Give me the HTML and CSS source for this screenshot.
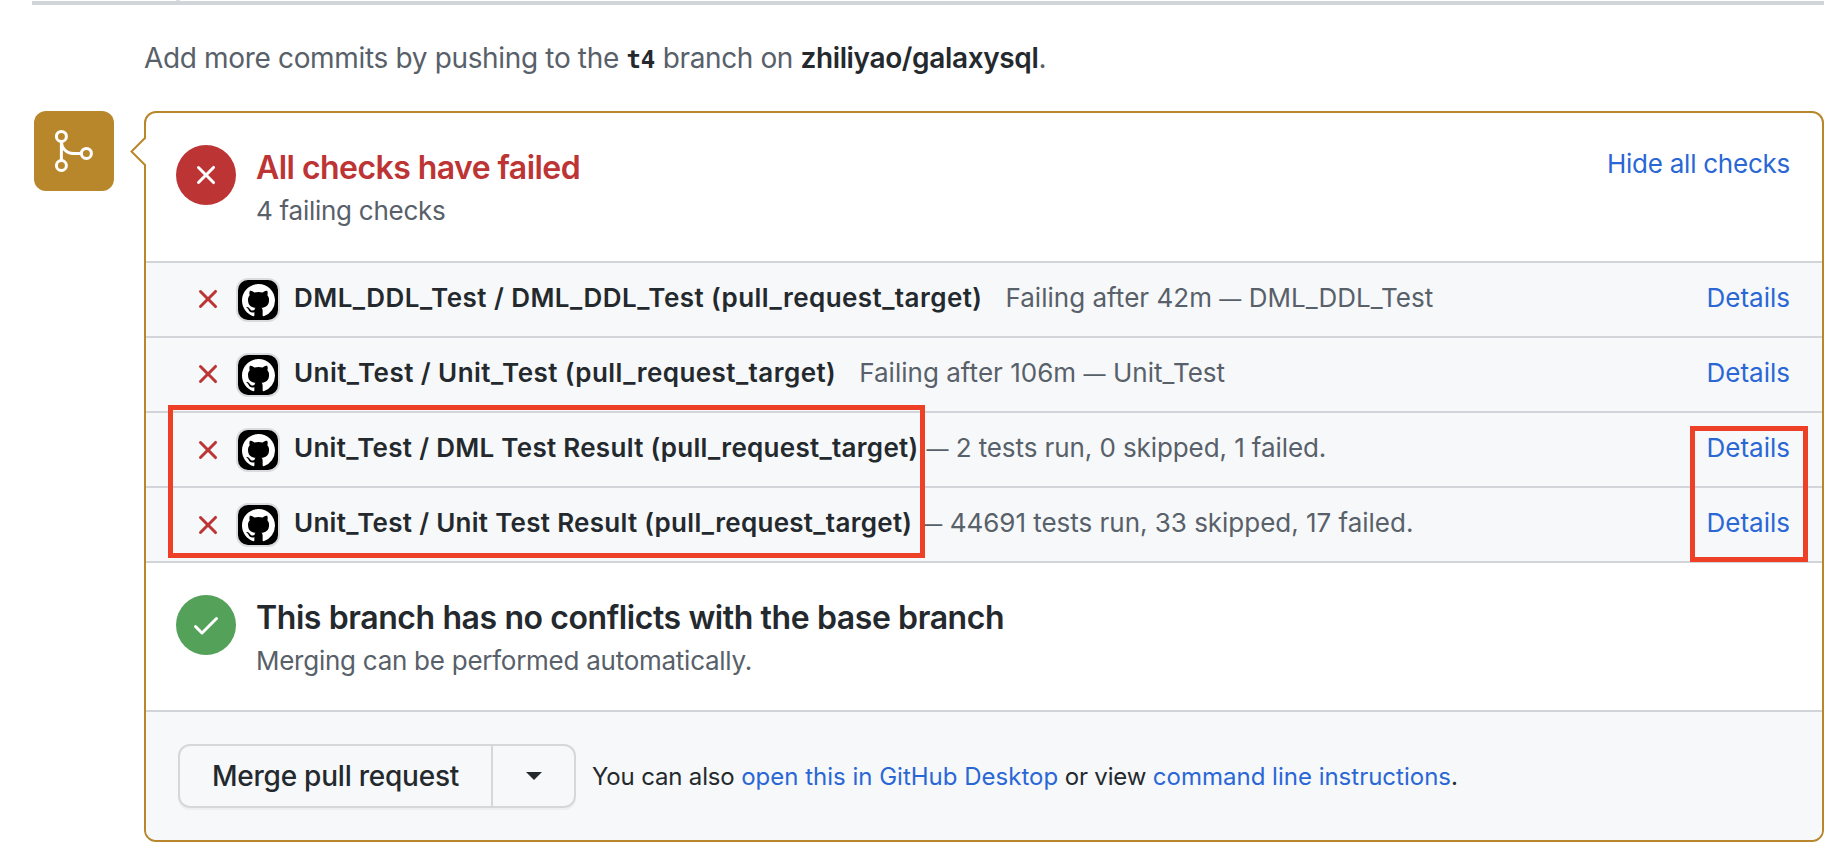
FILE: index.html
```
<!DOCTYPE html>
<html lang="en">
<head>
<meta charset="utf-8">
<title>Merge status</title>
<link rel="stylesheet" href="styles.css">
</head>
<body>
<svg class="defs" width="0" height="0" aria-hidden="true">
  <symbol id="x" viewBox="0 0 16 16"><path d="M3.72 3.72a.75.75 0 011.06 0L8 6.94l3.22-3.22a.75.75 0 111.06 1.06L9.06 8l3.22 3.22a.75.75 0 11-1.06 1.06L8 9.06l-3.22 3.22a.75.75 0 01-1.06-1.06L6.94 8 3.72 4.78a.75.75 0 010-1.06z"/></symbol>
  <symbol id="check" viewBox="0 0 16 16"><path d="M13.78 4.22a.75.75 0 010 1.06l-7.25 7.25a.75.75 0 01-1.06 0L2.22 9.28a.75.75 0 011.06-1.06L6 10.94l6.72-6.72a.75.75 0 011.06 0z"/></symbol>
  <symbol id="mark" viewBox="0 0 16 16"><path d="M8 0C3.58 0 0 3.58 0 8c0 3.54 2.29 6.53 5.47 7.59.4.07.55-.17.55-.38 0-.19-.01-.82-.01-1.49-2.01.37-2.53-.49-2.69-.94-.09-.23-.48-.94-.82-1.13-.28-.15-.68-.52-.01-.53.63-.01 1.08.58 1.23.82.72 1.21 1.87.87 2.33.66.07-.52.28-.87.51-1.07-1.78-.2-3.64-.89-3.64-3.95 0-.87.31-1.59.82-2.15-.08-.2-.36-1.02.08-2.12 0 0 .67-.21 2.2.82.64-.18 1.32-.27 2-.27s1.36.09 2 .27c1.53-1.04 2.2-.82 2.2-.82.44 1.1.16 1.92.08 2.12.51.56.82 1.27.82 2.15 0 3.07-1.87 3.75-3.65 3.95.29.25.54.73.54 1.48 0 1.07-.01 1.93-.01 2.2 0 .21.15.46.55.38A8.01 8.01 0 0016 8c0-4.42-3.58-8-8-8z"/></symbol>
</svg>
<div class="page">
  <div class="rule"><span class="rule-tick"></span></div>
  <p class="hint"><span class="hint-lead">Add more commits by pushing to the </span><code>t4</code><span class="hint-mid"> branch on </span><strong>zhiliyao/galaxysql</strong>.</p>
  <div class="timeline">
    <div class="badge">
      <svg width="80" height="80" viewBox="0 0 80 80" fill="none" stroke="#fff" stroke-width="3"><circle cx="27.4" cy="25.4" r="5"/><circle cx="27.4" cy="54.5" r="5"/><circle cx="52.4" cy="42.4" r="5"/><path d="M27.4 30.5v19M27.4 31c0 6 5 11.4 12 11.4h8"/></svg>
    </div>
    <div class="box">
      <svg class="pointer" width="18" height="32" viewBox="0 0 18 32"><path d="M16 3v25" stroke="#fff" stroke-width="2"/><path d="M16.5 1.5L2.5 15.5l14 14" fill="#fff" stroke="#b8872c" stroke-width="2"/></svg>
      <section class="status">
        <span class="circle circle-red"><svg width="32" height="32"><use href="#x"/></svg></span>
        <div class="status-text">
          <h2 class="title title-red">All checks have failed</h2>
          <p class="sub">4 failing checks</p>
        </div>
        <a class="link toggle">Hide all checks</a>
      </section>
      <ul class="checks">
        <li class="check"><svg class="fail" width="32" height="32"><use href="#x"/></svg><span class="avatar"><svg width="33" height="33"><use href="#mark"/></svg></span><strong class="name">DML_DDL_Test / DML_DDL_Test (pull_request_target)</strong><span class="desc">Failing after 42m <span class="dash">—</span> DML_DDL_Test</span><a class="link details">Details</a></li>
        <li class="check"><svg class="fail" width="32" height="32"><use href="#x"/></svg><span class="avatar"><svg width="33" height="33"><use href="#mark"/></svg></span><strong class="name">Unit_Test / Unit_Test (pull_request_target)</strong><span class="desc">Failing after 106m <span class="dash">—</span> Unit_Test</span><a class="link details">Details</a></li>
        <li class="check result"><svg class="fail" width="32" height="32"><use href="#x"/></svg><span class="avatar"><svg width="33" height="33"><use href="#mark"/></svg></span><strong class="name">Unit_Test / DML Test Result (pull_request_target)</strong><span class="desc"><span class="dash">—</span> 2 tests run, 0 skipped, 1 failed.</span><a class="link details">Details</a></li>
        <li class="check result"><svg class="fail" width="32" height="32"><use href="#x"/></svg><span class="avatar"><svg width="33" height="33"><use href="#mark"/></svg></span><strong class="name">Unit_Test / Unit Test Result (pull_request_target)</strong><span class="desc desc-wide"><span class="dash">—</span> 44691 tests run, 33 skipped, 17 failed.</span><a class="link details">Details</a></li>
      </ul>
      <section class="status status-ok">
        <span class="circle circle-green"><svg width="32" height="32"><use href="#check"/></svg></span>
        <div class="status-text">
          <h2 class="title title-long">This branch has no conflicts with the base branch</h2>
          <p class="sub">Merging can be performed automatically.</p>
        </div>
      </section>
      <footer class="actions">
        <div class="merge"><button class="merge-main">Merge pull request</button><button class="merge-more" aria-label="Select merge method"><span class="caret"></span></button></div>
        <p class="alt">You can also <a>open this in GitHub Desktop</a> or view <a>command line instructions</a>.</p>
      </footer>
    </div>
  </div>
</div>
<div class="mark mark-names"></div>
<div class="mark mark-details"></div>
</body>
</html>
```
FILE: styles.css
```
* { box-sizing: border-box; }
body { margin: 0; background: #fff; color: #24292e; font-family: Inter, "Liberation Sans", sans-serif; font-size: 26px; line-height: 39px; }
.defs { display: block; }
.page { padding: 0 24px 0 32px; height: 860px; overflow: hidden; }
h2, p, ul { margin: 0; padding: 0; font-weight: inherit; }
.rule { height: 5px; border-bottom: 4px solid #d1d5da; }
.rule-tick { display: block; width: 4px; height: 1px; margin-left: 144px; background: #dce0e4; }
.hint { padding: 32px 0 0 112px; font-size: 28px; line-height: 42px; color: #586069; white-space: nowrap; }
.hint-lead { letter-spacing: -.34px; }
.hint-mid { letter-spacing: -.4px; }
.hint strong, .hint code { color: #24292e; font-weight: 600; }
.hint strong { letter-spacing: -.36px; }
.hint code { font: bold 24px "DejaVu Sans Mono", monospace; }
.timeline { display: flex; gap: 30px; margin: 32px 0 0 2px; }
.badge { width: 80px; height: 80px; border-radius: 12px; background: #b8872c; }
.badge svg { display: block; }
.box { position: relative; flex: 1; height: 731px; border: 2px solid #b8872c; border-radius: 12px; }
.pointer { position: absolute; left: -17px; top: 23px; }
.status { display: flex; height: 148px; padding: 32px 32px 0 30px; }
.status-ok { height: 147px; }
.circle { display: flex; width: 60px; height: 60px; border-radius: 50%; align-items: center; justify-content: center; fill: #fff; }
.circle-red { background: #bd3435; }
.circle-green { background: #54a159; }
.status-text { flex: 1; padding-left: 20px; }
.title { font-size: 32px; line-height: 46px; font-weight: 600; letter-spacing: -.55px; white-space: nowrap; }
.title-long { letter-spacing: -.41px; }
.title-red { color: #bd3435; }
.sub { color: #586069; line-height: 39px; letter-spacing: -.26px; }
.link { color: #2a67d5; letter-spacing: -.25px; }
.toggle { margin-top: -1px; }
.checks { list-style: none; background: #f6f8fa; border-bottom: 2px solid #d1d5da; }
.check { display: flex; height: 75px; border-top: 2px solid #d1d5da; padding: 15px 32px 0 46px; white-space: nowrap; }
.fail { fill: #bd3435; margin-top: 5px; }
.result .fail { margin-top: 6px; }
.avatar { display: flex; width: 40px; height: 40px; margin: 2px 16px 0 14px; border-radius: 10px; background: #000; fill: #fff; box-shadow: 0 0 0 2px #d9dbde; align-items: center; justify-content: center; }
.name { font-weight: 600; letter-spacing: .45px; }
.result .name { letter-spacing: .29px; }
.desc { color: #586069; margin-left: 23px; letter-spacing: .02px; }
.result .desc { margin-left: 8px; letter-spacing: -.09px; }
.result .desc-wide { letter-spacing: -.02px; }
.dash { font-size: 22px; }
.details { margin-left: auto; letter-spacing: 0; }
.actions { display: flex; height: 130px; border-top: 2px solid #d1d5da; background: #f6f8fa; border-radius: 0 0 10px 10px; padding: 32px 0 0 32px; }
.merge { display: flex; width: 398px; height: 64px; border: 2px solid #d5d7da; border-radius: 12px; box-shadow: 0 2px 0 rgba(27,31,35,.04); }
.merge button { border: 0; background: none; padding: 0; color: #24292e; font: 500 28px/60px Inter, "Liberation Sans", sans-serif; letter-spacing: -.23px; }
.merge .merge-main { width: 311px; text-align: center; }
.merge .merge-more { flex: 1; border-left: 2px solid #d5d7da; display: flex; align-items: center; justify-content: center; }
.caret { border: 8px solid transparent; border-top-color: #24292e; border-bottom: 0; }
.alt { font-size: 24px; line-height: 66px; padding-left: 16px; white-space: nowrap; letter-spacing: -.16px; }
.alt a { color: #2a67d5; letter-spacing: 0; }
.mark { position: absolute; border: 5px solid #ed4026; }
.mark-names { left: 168px; top: 405px; width: 757px; height: 153px; }
.mark-details { left: 1690px; top: 426px; width: 118px; height: 136px; }
```
